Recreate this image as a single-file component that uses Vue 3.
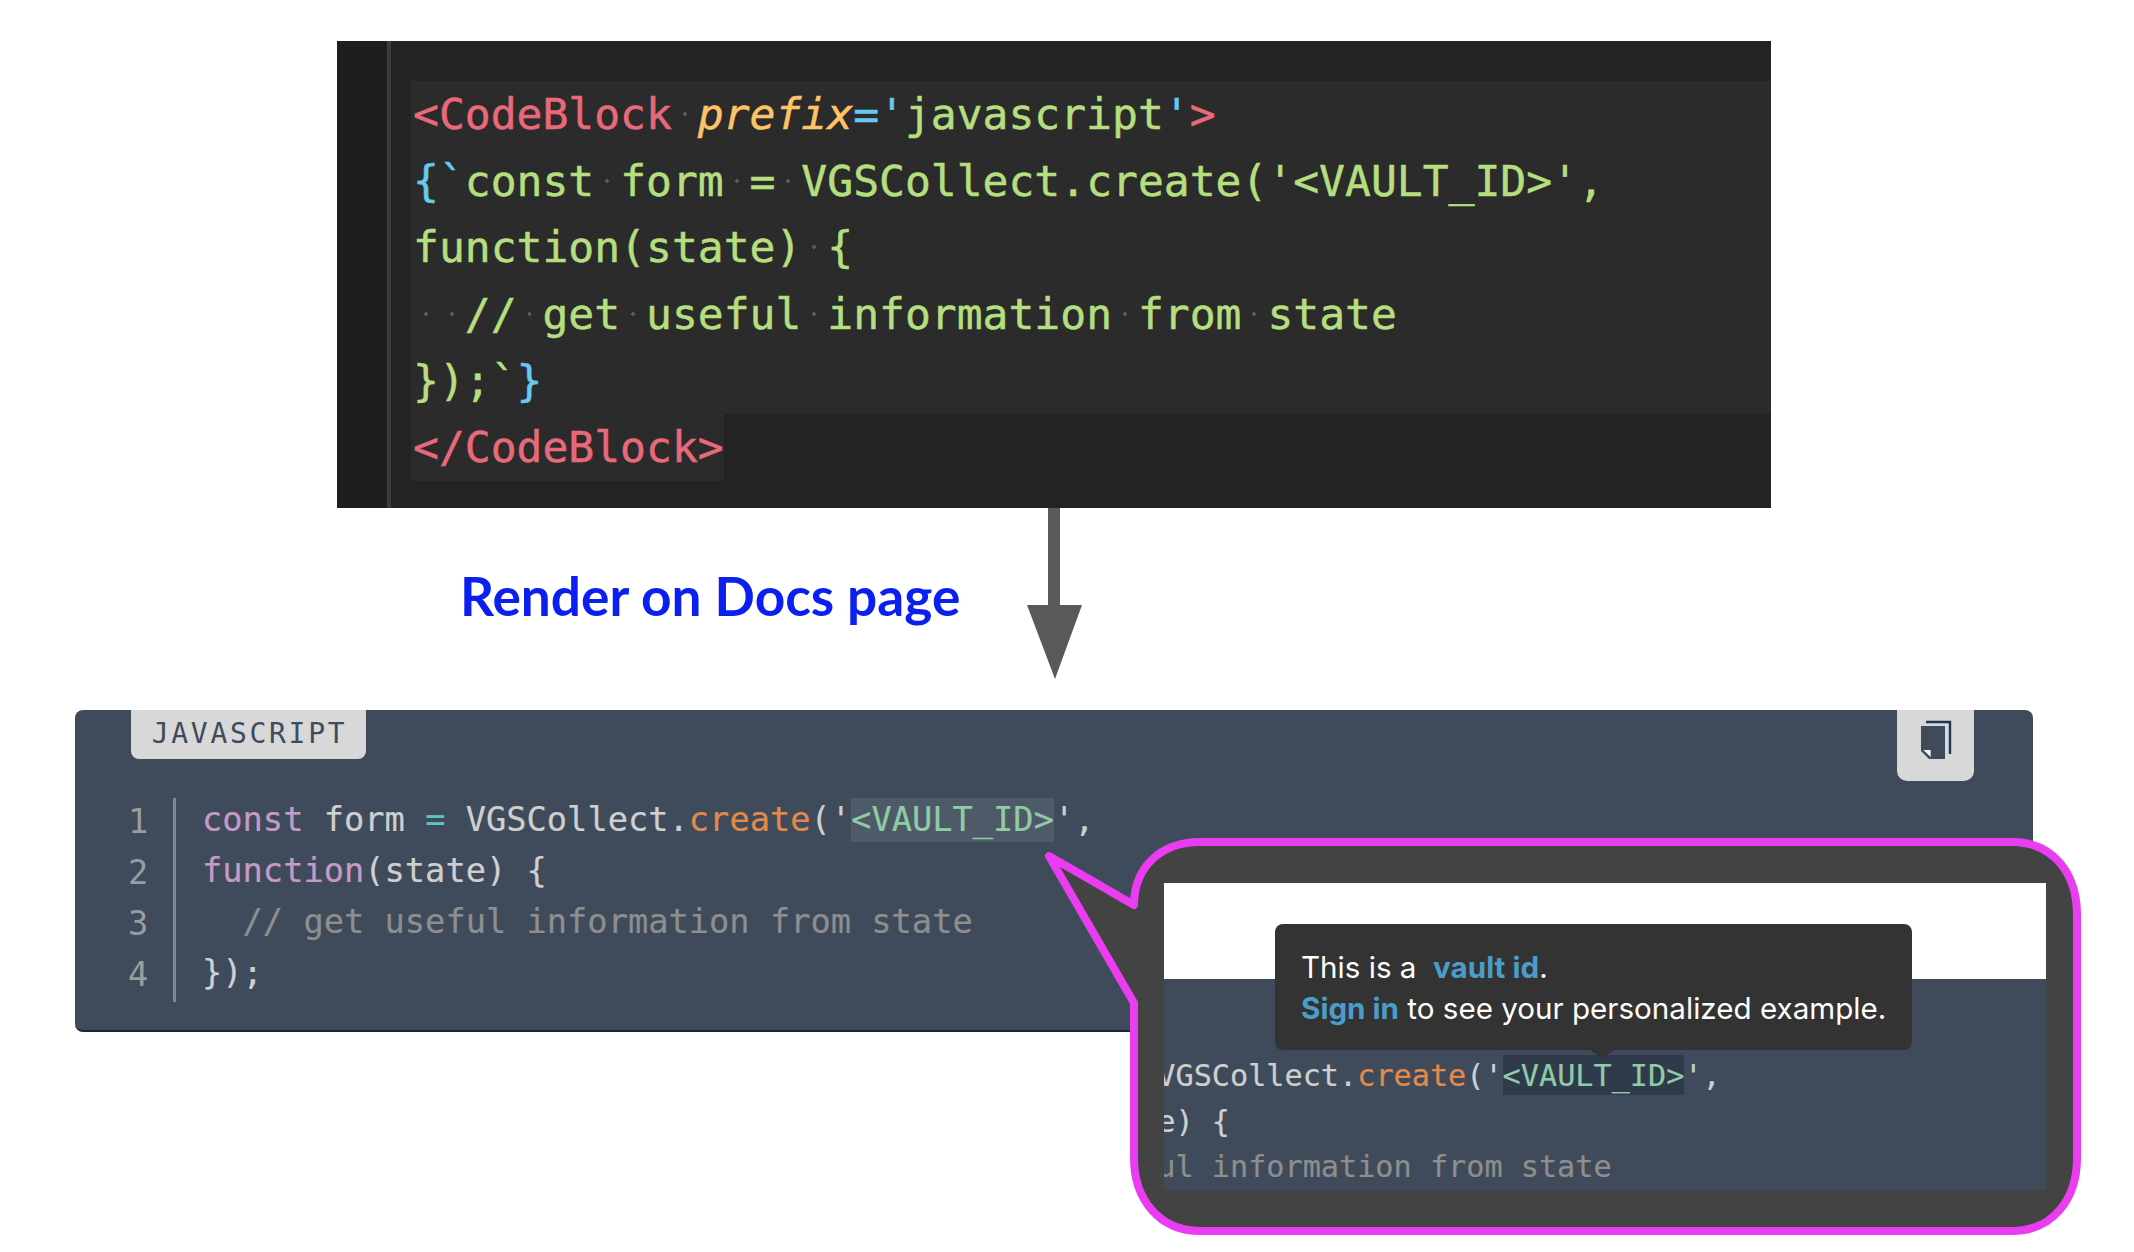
<script setup>
const tok = (s) =>
  s.split('|').map((p) => {
    const i = p.indexOf(':')
    return { c: p.slice(0, i), t: p.slice(i + 1) }
  })

const splitWs = (s) =>
  tok(s).flatMap((p) =>
    p.t.split(/( )/).filter(Boolean).map((t) => (t === ' ' ? { c: 'ws', t } : { c: p.c, t }))
  )

const editorLines = [
  splitWs("r:<CodeBlock |o:prefix|b:='|g:javascript|b:'|r:>"),
  splitWs("b:{`|g:const form = VGSCollect.create('<VAULT_ID>',"),
  splitWs('g:function(state) {'),
  splitWs('g:  // get useful information from state'),
  splitWs('g:});`|b:}'),
  splitWs('r:</CodeBlock>')
]

const docLines = [
  tok("k:const|d: form |e:=|d: VGSCollect.|f:create|d:('|h:<VAULT_ID>|d:',"),
  tok('k:function|d:(state) {'),
  tok('m:  // get useful information from state'),
  tok('d:});')
]
</script>

<template>
  <main class="page">
    <section class="editor">
      <div v-for="(line, i) in editorLines" :key="i" class="ed-line" :class="{ last: i === 5 }">
        <span v-for="(p, j) in line" :key="j" :class="'ed-' + p.c">{{ p.t }}</span>
      </div>
    </section>

    <section class="between">
      <h2 class="title">Render on Docs page</h2>
      <svg class="arrow" width="55" height="171" viewBox="0 0 55 171">
        <path d="M21 0h12v97h22L28 171 0 97h21z" fill="#595959" />
      </svg>
    </section>

    <section class="docs">
      <header class="docs-head">
        <span class="tab">JAVASCRIPT</span>
        <button class="copy" aria-label="Copy">
          <svg width="32" height="40" viewBox="0 0 32 40">
            <path d="M6 2H30V34" fill="none" stroke="#1c3657" stroke-width="2.4" />
            <path d="M1 6H25V39H9L1 31Z" fill="#3f4b5b" />
            <path d="M3.3 30H10.7V37Z" fill="#f2f2f2" />
          </svg>
        </button>
      </header>
      <div class="docs-body">
        <div class="gutter">
          <span v-for="n in 4" :key="n">{{ n }}</span>
        </div>
        <div class="code">
          <div v-for="(line, i) in docLines" :key="i" class="doc-line">
            <span v-for="(p, j) in line" :key="j" :class="'c-' + p.c">{{ p.t }}</span>
          </div>
        </div>
      </div>
    </section>

    <aside class="callout">
      <svg class="bubble" width="1060" height="410" viewBox="1040 830 1060 410">
        <path
          d="M1049 856L1134 905C1134 868 1160 842 1200 842H2012C2052 842 2077 872 2077 915V1158C2077 1200 2052 1231 2012 1231H1200C1160 1231 1134 1200 1134 1158V1003Z"
          fill="#434343"
          stroke="#ea3cf0"
          stroke-width="8"
          stroke-linejoin="round"
        />
      </svg>
      <div class="frame">
        <div class="frame-white"></div>
        <div class="frame-code">
          <div v-for="(line, i) in docLines.slice(0, 3)" :key="i" class="zoom-line">
            <span v-for="(p, j) in line" :key="j" :class="'z-' + p.c">{{ p.t }}</span>
          </div>
        </div>
        <div class="tooltip">
          <p>This is a&nbsp; <a class="link">vault id</a>.</p>
          <p><a class="link">Sign in</a> to see your personalized example.</p>
        </div>
      </div>
    </aside>
  </main>
</template>

<style scoped>
.page {
  position: relative;
  width: 2134px;
  height: 1252px;
  padding-top: 41px;
  box-sizing: border-box;
  background: #fff;
  overflow: hidden;
}

.editor {
  width: 1434px;
  height: 467px;
  margin-left: 337px;
  padding: 40px 0 0 74px;
  box-sizing: border-box;
  background: linear-gradient(to right, #1e1e1e 50px, #3c3c3c 50px, #3c3c3c 54px, #232323 54px);
  font: 43px/66.7px "DejaVu Sans Mono", monospace;
  white-space: pre;
  -webkit-text-stroke: 0.5px;
}
.ed-line {
  height: 66.7px;
  padding-left: 2px;
  background: #2b2b2b;
}
.ed-line.last {
  width: fit-content;
}
.ed-r { color: #e8697a; }
.ed-o { color: #fcc466; font-style: italic; }
.ed-b { color: #66c9ef; }
.ed-g { color: #b5de7f; }
.ed-ws {
  color: transparent;
  -webkit-text-stroke: 0;
  background: radial-gradient(circle at center, #5b5b5b 1.6px, transparent 2px);
}

.between {
  display: grid;
  grid-template-columns: 460px 567px 55px;
  height: 202px;
  align-items: start;
}
.title {
  grid-column: 2;
  grid-row: 1;
  margin: 57px 0 0;
  font: 700 53.2px/60px Lato, sans-serif;
  color: #0a1ff0;
  white-space: nowrap;
}
.arrow {
  grid-column: 3;
  grid-row: 1;
  display: block;
}

.docs {
  width: 1958px;
  height: 322px;
  margin-left: 75px;
  box-sizing: border-box;
  background: #3f4b5b;
  border-radius: 8px;
  border-bottom: 2px solid #1a2540;
}
.docs-head {
  display: flex;
  justify-content: space-between;
  align-items: flex-start;
  height: 71px;
  padding: 0 59px 0 56px;
}
.tab {
  width: 233px;
  height: 49px;
  padding-left: 2px;
  background: #d8d8d8;
  border-radius: 0 0 8px 8px;
  color: #3f4b5b;
  font: 28px/48px "DejaVu Sans Mono", monospace;
  letter-spacing: 2.7px;
  text-align: center;
}
.copy {
  display: flex;
  align-items: flex-start;
  width: 77px;
  height: 71px;
  padding: 10px 0 0 23px;
  border: 0;
  background: #d8d8d8;
  border-radius: 0 0 10px 10px;
  box-sizing: border-box;
}
.copy svg {
  display: block;
}
.docs-body {
  display: flex;
  margin-top: 17px;
  font: 33.7px/51px "DejaVu Sans Mono", monospace;
  white-space: pre;
}
.gutter {
  display: flex;
  flex-direction: column;
  width: 45px;
  padding-left: 53px;
  border-right: 3px solid #83888f;
  color: #9a9c9f;
  line-height: 51px;
}
.gutter span {
  position: relative;
  top: -2px;
}
.code {
  margin: -4px 0 0 26px;
  -webkit-text-stroke: 0.2px;
}
.doc-line {
  height: 51px;
  color: #cfcfcf;
}
.c-k { color: #c59bc6; }
.c-d { color: #cfcfcf; }
.c-e { color: #5fc4c0; }
.c-f { color: #e38a4a; }
.c-m { color: #8e8e8e; }
.c-h {
  padding: 2px 0 3px;
  color: #8fcba4;
  background: #4f5a69;
}

.callout {
  position: absolute;
  left: 1040px;
  top: 830px;
  width: 1060px;
  height: 410px;
}
.bubble {
  position: absolute;
  inset: 0;
  display: block;
}
.frame {
  position: relative;
  margin: 53px 0 0 124px;
  width: 882px;
  height: 307px;
  background: #3f4b5b;
}
.frame-white {
  height: 96px;
  background: #fff;
}
.frame-code {
  height: 211px;
  padding-top: 74px;
  box-sizing: border-box;
  overflow: hidden;
  font: 30.2px/45.5px "DejaVu Sans Mono", monospace;
  white-space: pre;
  color: #cfcfcf;
  -webkit-text-stroke: 0.2px;
}
.zoom-line {
  height: 45.5px;
  margin-left: -243px;
}
.z-k { color: #c59bc6; }
.z-d { color: #cfcfcf; }
.z-e { color: #5fc4c0; }
.z-f { color: #e38a4a; }
.z-m { color: #8e8e8e; }
.z-h {
  padding: 3px 0 2px;
  color: #8fcba4;
  background: #2f3a4b;
}
.tooltip {
  position: absolute;
  left: 111px;
  top: 41px;
  width: 637px;
  height: 126px;
  padding: 23px 0 0 26px;
  box-sizing: border-box;
  background: #333;
  border-radius: 8px;
  color: #fff;
  font: 29.6px/41px Inter, sans-serif;
}
.tooltip::after {
  content: "";
  position: absolute;
  left: 315px;
  bottom: -8px;
  border: 12px solid transparent;
  border-bottom: 0;
  border-top: 8px solid #333;
}
.tooltip p {
  margin: 0;
  white-space: nowrap;
}
.link {
  color: #4a9dc8;
  font-weight: 700;
}
</style>
